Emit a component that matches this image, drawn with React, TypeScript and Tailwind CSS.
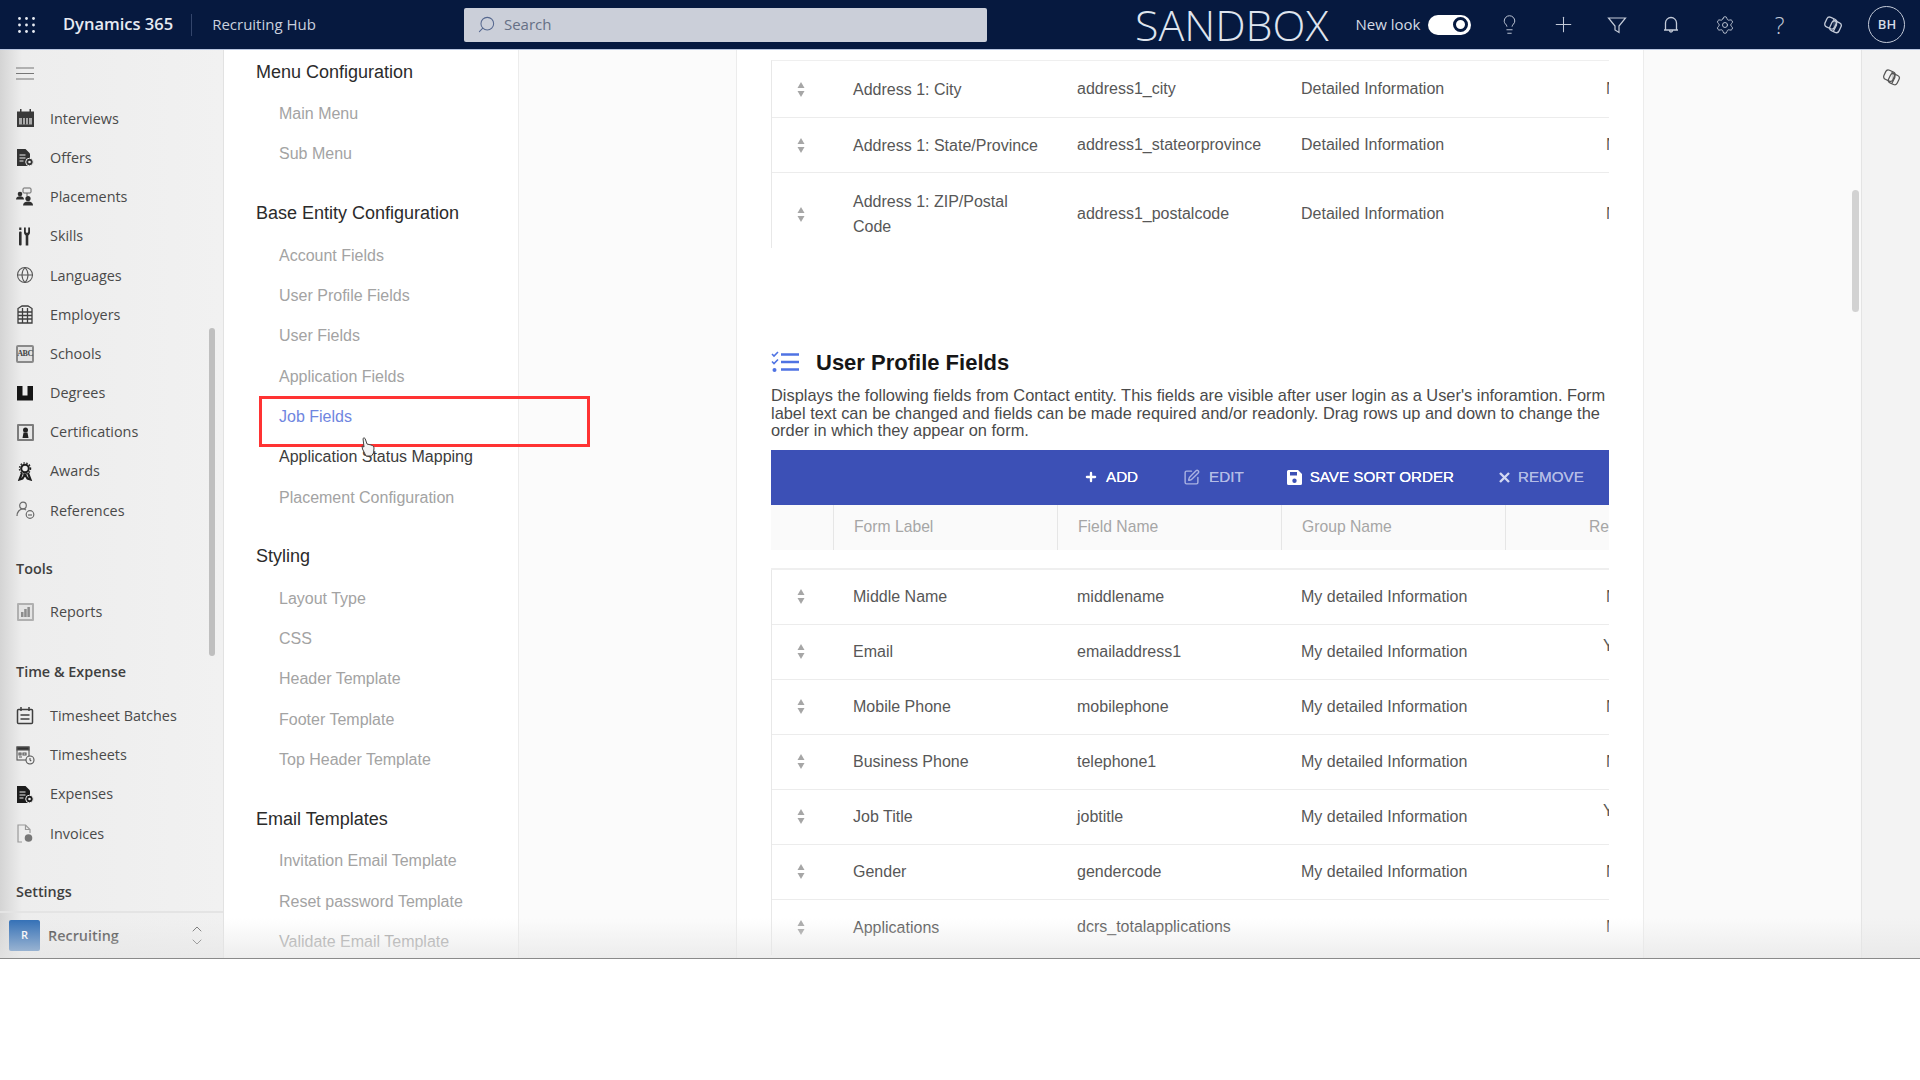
import { ChevronDown, ChevronUp, Globe, Lightbulb, Plus, Search, Settings, SquarePen } from "lucide-react";
import type { ReactNode } from "react";

const Copilot = ({ size = 18 }: { size?: number }) => (
  <svg width={size} height={size} viewBox="0 0 20 20" fill="none" stroke="currentColor" strokeWidth="1.300">
    <rect x="2.500" y="2.800" width="10.500" height="10.500" rx="3" transform="rotate(25 7.700 8)" />
    <rect x="7.500" y="6.500" width="10" height="10.500" rx="3" transform="rotate(25 12.500 11.700)" />
    <path d="M10 4.500c3 1 4 3 3.500 5.500l-3 6" fill="currentColor" fillOpacity="0.250" />
  </svg>
);

const DocIcon = ({ fill, badge }: { fill: string; badge: string }) => (
  <svg width="18" height="19" viewBox="0 0 18 19" fill={fill}>
    <path d="M1 1h8.500L14 5.500V18H1z" />
    <path d="M3.500 7h6M3.500 10h6M3.500 13h4" stroke="#ececec" strokeWidth="1.200" />
    <circle cx="13.500" cy="14" r="3.800" fill={badge} stroke="#ececec" strokeWidth="1" />
    <circle cx="13.500" cy="14" r="1.300" fill="#ececec" />
  </svg>
);

const navIcon: Record<string, ReactNode> = {
  Interviews: (
    <svg width="19" height="19" viewBox="0 0 19 19" fill="#3a3a3a">
      <path d="M4 0h1.500v2.500h8V0H15v2.500h3V18H1V2.500h3z" />
      <rect x="3" y="9" width="13" height="6.500" fill="#a9a9a9" />
      <path d="M6.500 9v6.500M9.500 9v6.500M12.500 9v6.500" stroke="#3a3a3a" strokeWidth="1" />
    </svg>
  ),
  Offers: <DocIcon fill="#333" badge="#333" />,
  Placements: (
    <svg width="19" height="19" viewBox="0 0 19 19" fill="#2f2f2f">
      <circle cx="4" cy="7" r="2.300" />
      <path d="M0 12.500c0-2 1.800-3.200 4-3.200s4 1.200 4 3.200z" />
      <rect x="7" y="1" width="8" height="5" rx="1" fill="none" stroke="#666" />
      <path d="M11 6v3" stroke="#666" />
      <circle cx="12" cy="11.500" r="2.600" />
      <path d="M7 18.500c0-2.800 2.200-4 5-4s5 1.200 5 4z" />
    </svg>
  ),
  Skills: (
    <svg width="18" height="19" viewBox="0 0 18 19" fill="#2f2f2f">
      <rect x="3" y="4.500" width="2.600" height="14" rx="1" />
      <rect x="3.200" y="0.500" width="2.200" height="2.500" />
      <path d="M8 .5h1.800v4c0 .8.5 1.300 1.200 1.300s1.200-.5 1.200-1.300v-4H14v5c0 1.400-.9 2.400-1.700 2.900V18.500H9.700V8.400C8.900 7.900 8 6.900 8 5.500z" />
    </svg>
  ),
  Languages: <Globe size={18} strokeWidth={1.400} className="text-[#555]" />,
  Employers: (
    <svg width="18" height="19" viewBox="0 0 18 19" fill="none" stroke="#3f3f3f" strokeWidth="1.300">
      <path d="M2 18V3.500L6 1h6l4 2.500V18z" />
      <path d="M2 7h14M2 10.500h14M2 14h14M6.500 3v15M11.500 3v15" />
    </svg>
  ),
  Schools: (
    <span className="flex h-[18px] w-[18px] items-center justify-center rounded-[2px] border-2 border-[#8a8a8a] bg-[#e2e2e2]">
      <span className="font-['Liberation_Serif',serif] text-[8px] leading-none font-bold tracking-[-0.5px] text-[#444]">ABC</span>
    </span>
  ),
  Degrees: (
    <svg width="18" height="18" viewBox="0 0 18 18" fill="#161616">
      <path d="M1 2h5.500v9.500h5V2H17v14.500H1z" />
    </svg>
  ),
  Certifications: (
    <span className="flex h-[17px] w-[17px] items-center justify-center rounded-[1px] border-2 border-[#7c7c7c] bg-[#e6e6e6]">
      <svg width="9" height="11" viewBox="0 0 9 11" fill="#222">
        <circle cx="4.500" cy="3" r="2.500" />
        <path d="M1.500 11 2.500 5.500h4l1 5.500z" />
      </svg>
    </span>
  ),
  Awards: (
    <svg width="16" height="19" viewBox="0 0 16 19" fill="none" stroke="#1e1e1e" strokeWidth="2.100">
      <circle cx="8" cy="6.500" r="3.800" />
      <path d="m5 11-2.500 6.500 3-1 2.500-4 2.500 4 3 1L11 11" />
      <circle cx="8" cy="6.500" r="5.600" strokeDasharray="1.500 1.500" strokeWidth="1.300" />
    </svg>
  ),
  References: (
    <svg width="19" height="19" viewBox="0 0 19 19" fill="none" stroke="#6a6a6a" strokeWidth="1.200">
      <circle cx="7" cy="4.500" r="3.300" />
      <path d="M1 15c0-4 2.500-7 6-7 1 0 2 .3 3 1" />
      <circle cx="14" cy="13.500" r="3.800" />
      <path d="M12 14h4" />
    </svg>
  ),
  Reports: (
    <span className="flex h-[18px] w-[17px] items-center justify-center rounded-[1px] border-2 border-[#b0b0b0] bg-[#e4e4e4]">
      <svg width="9" height="10" viewBox="0 0 9 10" fill="#8d8d8d">
        <rect x="0" y="5" width="2.500" height="5" />
        <rect x="3.200" y="2" width="2.500" height="8" />
        <rect x="6.400" y="0" width="2.500" height="10" />
      </svg>
    </span>
  ),
  "Timesheet Batches": (
    <svg width="18" height="19" viewBox="0 0 18 19" fill="none" stroke="#3f3f3f" strokeWidth="1.500">
      <rect x="1.500" y="3.500" width="15" height="14" rx="1" />
      <path d="M5 1v4M13 1v4M4.500 9h9M4.500 13h9" />
    </svg>
  ),
  Timesheets: (
    <svg width="19" height="19" viewBox="0 0 19 19" fill="none" stroke="#555" strokeWidth="1.100">
      <rect x="1" y="1" width="12" height="13" />
      <rect x="1" y="1" width="12" height="3" fill="#333" />
      <path d="M3 7h2v2H3zM7 7h3v2H7zM3 11h3" />
      <circle cx="14" cy="14" r="4" fill="#ececec" />
      <path d="M14 12v2l1.200 1" />
    </svg>
  ),
  Expenses: <DocIcon fill="#1c1c1c" badge="#1c1c1c" />,
  Invoices: (
    <svg width="18" height="19" viewBox="0 0 18 19" fill="none" stroke="#9a9a9a" strokeWidth="1.200">
      <path d="M6 18H2V1h7.500L14 5.500V9" />
      <path d="M9.500 1v4.500H14" />
      <circle cx="12.500" cy="14" r="3.800" fill="#777" stroke="none" />
    </svg>
  ),
};

type NavGroup = { label?: string; labelClass?: string; items: string[] };

const navGroups: NavGroup[] = [
  { items: ["Interviews", "Offers", "Placements", "Skills", "Languages", "Employers", "Schools", "Degrees", "Certifications", "Awards", "References"] },
  { label: "Tools", labelClass: "mt-[19px] mb-1", items: ["Reports"] },
  { label: "Time & Expense", labelClass: "mt-[21px] mb-[5px]", items: ["Timesheet Batches", "Timesheets", "Expenses", "Invoices"] },
  { label: "Settings", labelClass: "mt-[19px] mb-1", items: [] },
];

const panelSections = [
  { title: "Menu Configuration", items: ["Main Menu", "Sub Menu"] },
  { title: "Base Entity Configuration", items: ["Account Fields", "User Profile Fields", "User Fields", "Application Fields", "Job Fields", "Application Status Mapping", "Placement Configuration"] },
  { title: "Styling", items: ["Layout Type", "CSS", "Header Template", "Footer Template", "Top Header Template"] },
  { title: "Email Templates", items: ["Invitation Email Template", "Reset password Template", "Validate Email Template"] },
];

const SortHandle = () => (
  <svg width="8" height="15" viewBox="0 0 8 15" fill="#a6a6a6">
    <path d="M4 0 7.500 6H.5z" />
    <path d="M.5 9h7L4 15z" />
  </svg>
);

type Field = { label: string; name: string; group: string; flag: string };

const topFields: Field[] = [
  { label: "Address 1: City", name: "address1_city", group: "Detailed Information", flag: "No" },
  { label: "Address 1: State/Province", name: "address1_stateorprovince", group: "Detailed Information", flag: "No" },
  { label: "Address 1: ZIP/Postal Code", name: "address1_postalcode", group: "Detailed Information", flag: "No" },
];

const profileFields: Field[] = [
  { label: "Middle Name", name: "middlename", group: "My detailed Information", flag: "No" },
  { label: "Email", name: "emailaddress1", group: "My detailed Information", flag: "Yes" },
  { label: "Mobile Phone", name: "mobilephone", group: "My detailed Information", flag: "No" },
  { label: "Business Phone", name: "telephone1", group: "My detailed Information", flag: "No" },
  { label: "Job Title", name: "jobtitle", group: "My detailed Information", flag: "Yes" },
  { label: "Gender", name: "gendercode", group: "My detailed Information", flag: "No" },
  { label: "Applications", name: "dcrs_totalapplications", group: "", flag: "No" },
];

const FieldRow = ({ field, className, last }: { field: Field; className: string; last?: boolean }) => (
  <div className={`flex items-center overflow-hidden border-[#ececec] ${last ? "" : "border-b"} ${className}`}>
    <div className="flex w-[81px] shrink-0 justify-center pr-[24px]">
      <SortHandle />
    </div>
    <div className="w-[224px] shrink-0 pr-[35px] leading-[25px]">{field.label}</div>
    <div className="w-[224px] shrink-0">{field.name}</div>
    <div className="w-[305px] shrink-0">{field.group}</div>
    <div className={`shrink-0 ${field.flag === "Yes" ? "-mt-3 -ml-[3px]" : ""}`}>{field.flag}</div>
  </div>
);

const TopBar = () => (
  <header className="flex h-[50px] shrink-0 items-center border-b border-[#b9c6e0] bg-[#06193f] text-white">
    <svg className="ml-[18px]" width="17" height="16" viewBox="0 0 17 16" fill="#e8ecf4">
      {[1.500, 8.500, 15.500].map((x) =>
        [1.500, 8, 14.500].map((y) => <circle key={`${x}-${y}`} cx={x} cy={y} r="1.400" />),
      )}
    </svg>
    <span className="ml-7 font-['Open_Sans',sans-serif] text-[16.500px] font-semibold text-[#e6eaf2]">Dynamics 365</span>
    <span className="ml-[18px] h-[22px] w-px bg-[#33456b]" />
    <span className="ml-[20px] font-['Open_Sans',sans-serif] text-[15px] text-[#c9d0de]">Recruiting Hub</span>
    <div className="ml-[148px] flex h-[34px] w-[523px] items-center rounded-[2px] bg-[#cbcfd9] pl-[13px] text-[#667085]">
      <Search size={19} strokeWidth={1.300} className="-scale-x-100 text-[#56688f]" />
      <span className="ml-[8px] font-['Open_Sans',sans-serif] text-[15px]">Search</span>
    </div>
    <span className="ml-[148px] font-['Open_Sans',sans-serif] text-[43px] leading-none font-light text-[#dfe4ee]">SANDBOX</span>
    <span className="ml-[27px] font-['Open_Sans',sans-serif] text-[15px] text-[#d5dae5]">New look</span>
    <span className="ml-[8px] flex h-5 w-[43px] items-center justify-end rounded-full bg-white pr-[3px]">
      <span className="h-[15px] w-[15px] rounded-full border-[3px] border-[#06193f] bg-white" />
    </span>
    <div className="ml-[11px] flex items-center text-[#c3cad8]">
      <span className="flex w-[54px] justify-center">
        <Lightbulb size={21} strokeWidth={1.100} />
      </span>
      <span className="flex w-[54px] justify-center">
        <Plus size={25} strokeWidth={1} />
      </span>
      <span className="flex w-[54px] justify-center">
        <svg width="20" height="20" viewBox="0 0 20 20" fill="none" stroke="currentColor" strokeWidth="1.200">
          <path d="M1.500 3h17l-6.500 8v6.500l-4-2.500v-4z" />
        </svg>
      </span>
      <span className="flex w-[54px] justify-center">
        <svg width="16" height="20" viewBox="0 0 16 20" fill="none" stroke="currentColor" strokeWidth="1.300">
          <path d="M2.500 15V8a5.500 5.500 0 0 1 11 0v7zM1 15h14M6.500 15.500c0 2 3 2 3 0" />
        </svg>
      </span>
      <span className="flex w-[54px] justify-center">
        <Settings size={20} strokeWidth={1.100} />
      </span>
      <span className="flex w-[54px] justify-center font-['Open_Sans',sans-serif] text-[23px] leading-5 font-light">?</span>
      <span className="flex w-[54px] justify-center">
        <Copilot size={20} />
      </span>
    </div>
    <span className="ml-[8px] flex h-[37px] w-[37px] items-center justify-center rounded-full border border-[#c3cad8] font-['Open_Sans',sans-serif] text-[13px] font-semibold text-[#d5dae5]">BH</span>
  </header>
);

const Sidebar = () => (
  <aside className="relative flex w-[224px] shrink-0 flex-col border-r border-[#e2e2e2] bg-[linear-gradient(90deg,#d4d4d4_0,#ededed_22px,#f1f1f1_100%)] font-['Open_Sans',sans-serif] text-[14.400px] text-[#4a4a4a]">
    <div className="flex h-[46px] items-center pl-4">
      <svg width="18" height="13" viewBox="0 0 18 13" stroke="#777" strokeWidth="1.200">
        <path d="M0 1h18M0 6.500h18M0 12h18" />
      </svg>
    </div>
    <div className="min-h-0 flex-1 overflow-hidden pt-[3px]">
      {navGroups.map((group, i) => (
        <div key={i}>
          {group.label && <div className={`flex h-[39px] items-center pl-4 font-semibold text-[#3f3f3f] ${group.labelClass}`}>{group.label}</div>}
          {group.items.map((item) => (
            <div key={item} className="flex h-[39.2px] items-center">
              <span className="flex w-[50px] shrink-0 justify-center">{navIcon[item]}</span>
              {item}
            </div>
          ))}
        </div>
      ))}
    </div>
    <div className="flex h-[47px] shrink-0 items-center border-t-2 border-[#e4e4e4] pl-[9px]">
      <span className="flex h-[31px] w-[31px] items-center justify-center rounded-[2px] bg-[#2f6db5] text-[11px] font-semibold text-white">R</span>
      <span className="ml-2 font-semibold text-[#3f3f3f]">Recruiting</span>
      <span className="mr-[18px] ml-auto flex flex-col text-[#555]">
        <ChevronUp size={16} strokeWidth={1.300} className="-mb-[3px]" />
        <ChevronDown size={16} strokeWidth={1.300} />
      </span>
    </div>
    <div className="absolute top-[278px] left-[209px] h-[328px] w-[6px] rounded-full bg-[#bfbfbf]" />
  </aside>
);

const ConfigPanel = () => (
  <nav className="relative w-[295px] shrink-0 overflow-hidden border-r border-[#ececec] bg-white pt-[2px] pl-[32px] font-['Liberation_Sans',sans-serif]">
    {panelSections.map((section) => (
      <section key={section.title} className="mb-[19px]">
        <h2 className="mb-[2px] flex h-10 items-center text-[18px] text-[#2b2b2b]">{section.title}</h2>
        {section.items.map((item) => (
          <a
            key={item}
            className={`flex h-[40.3px] items-center pl-[23px] text-[16px] ${
              item === "Job Fields" ? "text-[#6f86e0]" : item === "Application Status Mapping" ? "text-[#3c3c3c]" : "text-[#a3a3a3]"
            }`}
          >
            {item}
          </a>
        ))}
      </section>
    ))}
  </nav>
);

const MainContent = () => (
  <main className="w-[908px] shrink-0 overflow-hidden border-x border-[#ececec] bg-white px-[34px] font-['Liberation_Sans',sans-serif] text-[16px] text-[#575757]">
    <div className="mt-[10px] border-t border-l border-[#e8e8e8] border-t-[#efefef]">
      <FieldRow field={topFields[0]} className="h-[57px]" />
      <FieldRow field={topFields[1]} className="h-[55px]" />
      <FieldRow field={topFields[2]} className="h-[75px] pt-[7px]" last />
    </div>

    <div className="mt-[94px] flex h-[40px] items-center">
      <svg width="28" height="22" viewBox="0 0 28 22" fill="none" stroke="#4f73e3">
        <path d="M10 3.500h18M10 11h18M10 18.500h18" strokeWidth="2.600" />
        <path d="m1 3 2 2 4-4M1 10.500l2 2 4-4" strokeWidth="1.600" />
        <circle cx="3.500" cy="19" r="2" fill="#4f73e3" stroke="none" />
      </svg>
      <h1 className="ml-[17px] text-[22px] font-bold text-[#161616]">User Profile Fields</h1>
    </div>
    <p className="mt-[5px] text-[16.400px] leading-[17.500px] text-[#4a4a4a]">
      Displays the following fields from Contact entity. This fields are visible after user login as a User's inforamtion. Form label text can be changed and fields can be made required and/or readonly. Drag rows up and down to change the order in which they appear on form.
    </p>

    <div className="mt-[10px] flex h-[55px] items-center bg-[#3c50b6] pl-[313px] text-[15.200px] [text-shadow:0_0_0.6px_currentColor]">
      <Plus size={14} strokeWidth={4} className="text-white" />
      <span className="ml-[8px] text-white">ADD</span>
      <SquarePen size={17} strokeWidth={2} className="ml-[45px] text-[#a9b2e2]" />
      <span className="ml-[9px] text-[#b4bce6]">EDIT</span>
      <svg className="ml-[43px]" width="15" height="15" viewBox="0 0 15 15" fill="white">
        <path d="M1.500 0H11l4 4v9.500a1.500 1.500 0 0 1-1.500 1.500h-12A1.500 1.500 0 0 1 0 13.500v-12A1.500 1.500 0 0 1 1.500 0zM3 2v3.500h7V2zm4.500 6.500a2.200 2.200 0 1 0 0 4.400 2.200 2.200 0 0 0 0-4.400z" fillRule="evenodd" />
      </svg>
      <span className="ml-[8px] text-white">SAVE SORT ORDER</span>
      <svg className="ml-[45px]" width="11" height="11" viewBox="0 0 11 11" stroke="#d3d8f2" strokeWidth="2.400">
        <path d="m1 1 9 9M10 1l-9 9" />
      </svg>
      <span className="ml-[8px] text-[#b4bce6]">REMOVE</span>
    </div>

    <div className="flex h-[45px] overflow-hidden bg-[#fafafa] text-[15.700px] text-[#a6a6a6]">
      <div className="w-[62px] shrink-0" />
      {["Form Label", "Field Name", "Group Name"].map((title) => (
        <div key={title} className="flex w-[224px] shrink-0 items-center border-l border-[#e6e6e6] pl-[20px]">{title}</div>
      ))}
      <div className="flex w-[104px] shrink-0 items-center justify-end border-l border-[#e6e6e6]">Re</div>
    </div>

    <div className="h-[20px] border-b-2 border-[#efefef]" />
    <div className="border-l border-[#e8e8e8]">
      {profileFields.map((field, i) => (
        <FieldRow key={field.name} field={field} className="h-[55px]" last={i === 6} />
      ))}
    </div>
  </main>
);

export default function App() {
  return (
    <div className="h-[1080px] w-full overflow-hidden bg-white">
      <div className="relative flex h-[959px] flex-col overflow-hidden border-b border-[#8a8a8a]">
        <TopBar />
        <div className="flex min-h-0 flex-1">
          <Sidebar />
          <ConfigPanel />
          <div className="w-[217px] shrink-0 bg-[#fbfbfb]" />
          <MainContent />
          <div className="relative w-[217px] shrink-0 bg-[#fafafa]">
            <div className="absolute top-[140px] right-[2px] h-[122px] w-[7px] rounded-full bg-[#d2d2d2]" />
          </div>
          <div className="flex flex-1 justify-center border-l border-[#e4e4e4] bg-[#f3f3f3] pt-[18px] text-[#555]">
            <Copilot size={19} />
          </div>
        </div>
        {/* red highlight box and cursor sit over the panel */}
        <div className="pointer-events-none absolute top-[396px] left-[259px] h-[51px] w-[331px] border-[3px] border-[#ff3333]" />
        <svg className="pointer-events-none absolute top-[437px] left-[360px]" width="16" height="20" viewBox="0 0 16 20" fill="#f4f4f4" stroke="#444" strokeWidth="1">
          <path d="M3 1.500c1-1 2-.5 2.300.5L7 7l4 1c2 .6 3 1.500 3 3l-.5 5-2 3H6L2.500 12 2 9l2 1z" />
        </svg>
        <div className="pointer-events-none absolute inset-x-0 bottom-0 h-[40px] bg-gradient-to-b from-transparent to-[#e6e6e6]/70" />
      </div>
    </div>
  );
}
